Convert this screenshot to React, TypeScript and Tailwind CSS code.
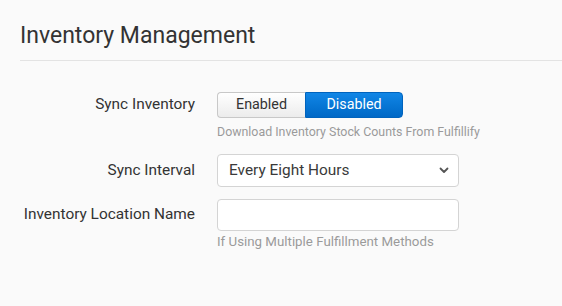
import React from "react";

export default function App() {
  return (
    <div className="w-[562px] h-[306px] bg-[#fafafa] overflow-hidden" style={{ fontFamily: "Roboto, 'Liberation Sans', sans-serif" }}>
      <div className="ml-[20px] pt-[22px] h-[61px] border-b border-[#e3e3e3]">
        <h1 className="text-[23px] leading-[28px] text-[#333] m-0 font-normal">Inventory Management</h1>
      </div>
      <div className="pt-[31px] flex flex-col">
        <div className="flex">
          <div className="w-[195px] h-[26px] flex items-center justify-end text-[15.4px] text-[#333]">Sync Inventory</div>
          <div className="ml-[22px] flex flex-col">
            <div className="flex h-[26px] w-[186px] text-[14.3px]">
              <div className="w-[88px] flex items-center justify-center border border-[#c8c8c8] border-r-0 rounded-l-[4px] bg-gradient-to-b from-white to-[#ececec] text-[#333]">Enabled</div>
              <div className="flex-1 flex items-center justify-center rounded-r-[4px] bg-gradient-to-b from-[#1186e6] to-[#0068c6] text-white border border-[#0063bd]">Disabled</div>
            </div>
            <div className="mt-[6px] text-[12.4px] leading-[15px] text-[#9a9a9a] whitespace-nowrap">Download Inventory Stock Counts From Fulfillify</div>
          </div>
        </div>
        <div className="flex mt-[15px]">
          <div className="w-[195px] h-[33px] flex items-center justify-end text-[15.4px] text-[#333]">Sync Interval</div>
          <div className="ml-[22px] w-[242px] h-[33px] border border-[#d4d4d4] rounded-[4px] bg-white flex items-center justify-between pl-[11px] pr-[9px] text-[15.4px] text-[#3a3a3a]">
            <span>Every Eight Hours</span>
            <svg width="10" height="7" viewBox="0 0 10 7" fill="none">
              <path d="M1.5 1.5 L5 5 L8.5 1.5" stroke="#555" strokeWidth="1.8" strokeLinecap="round" strokeLinejoin="round" />
            </svg>
          </div>
        </div>
        <div className="flex mt-[12px]">
          <div className="w-[195px] h-[32px] flex items-center justify-end text-[15.4px] text-[#333]">Inventory Location Name</div>
          <div className="ml-[22px] flex flex-col">
            <div className="w-[242px] h-[32px] border border-[#d4d4d4] rounded-[4px] bg-white"></div>
            <div className="mt-[3px] text-[13.3px] leading-[16px] text-[#9a9a9a] whitespace-nowrap">If Using Multiple Fulfillment Methods</div>
          </div>
        </div>
      </div>
    </div>
  );
}
